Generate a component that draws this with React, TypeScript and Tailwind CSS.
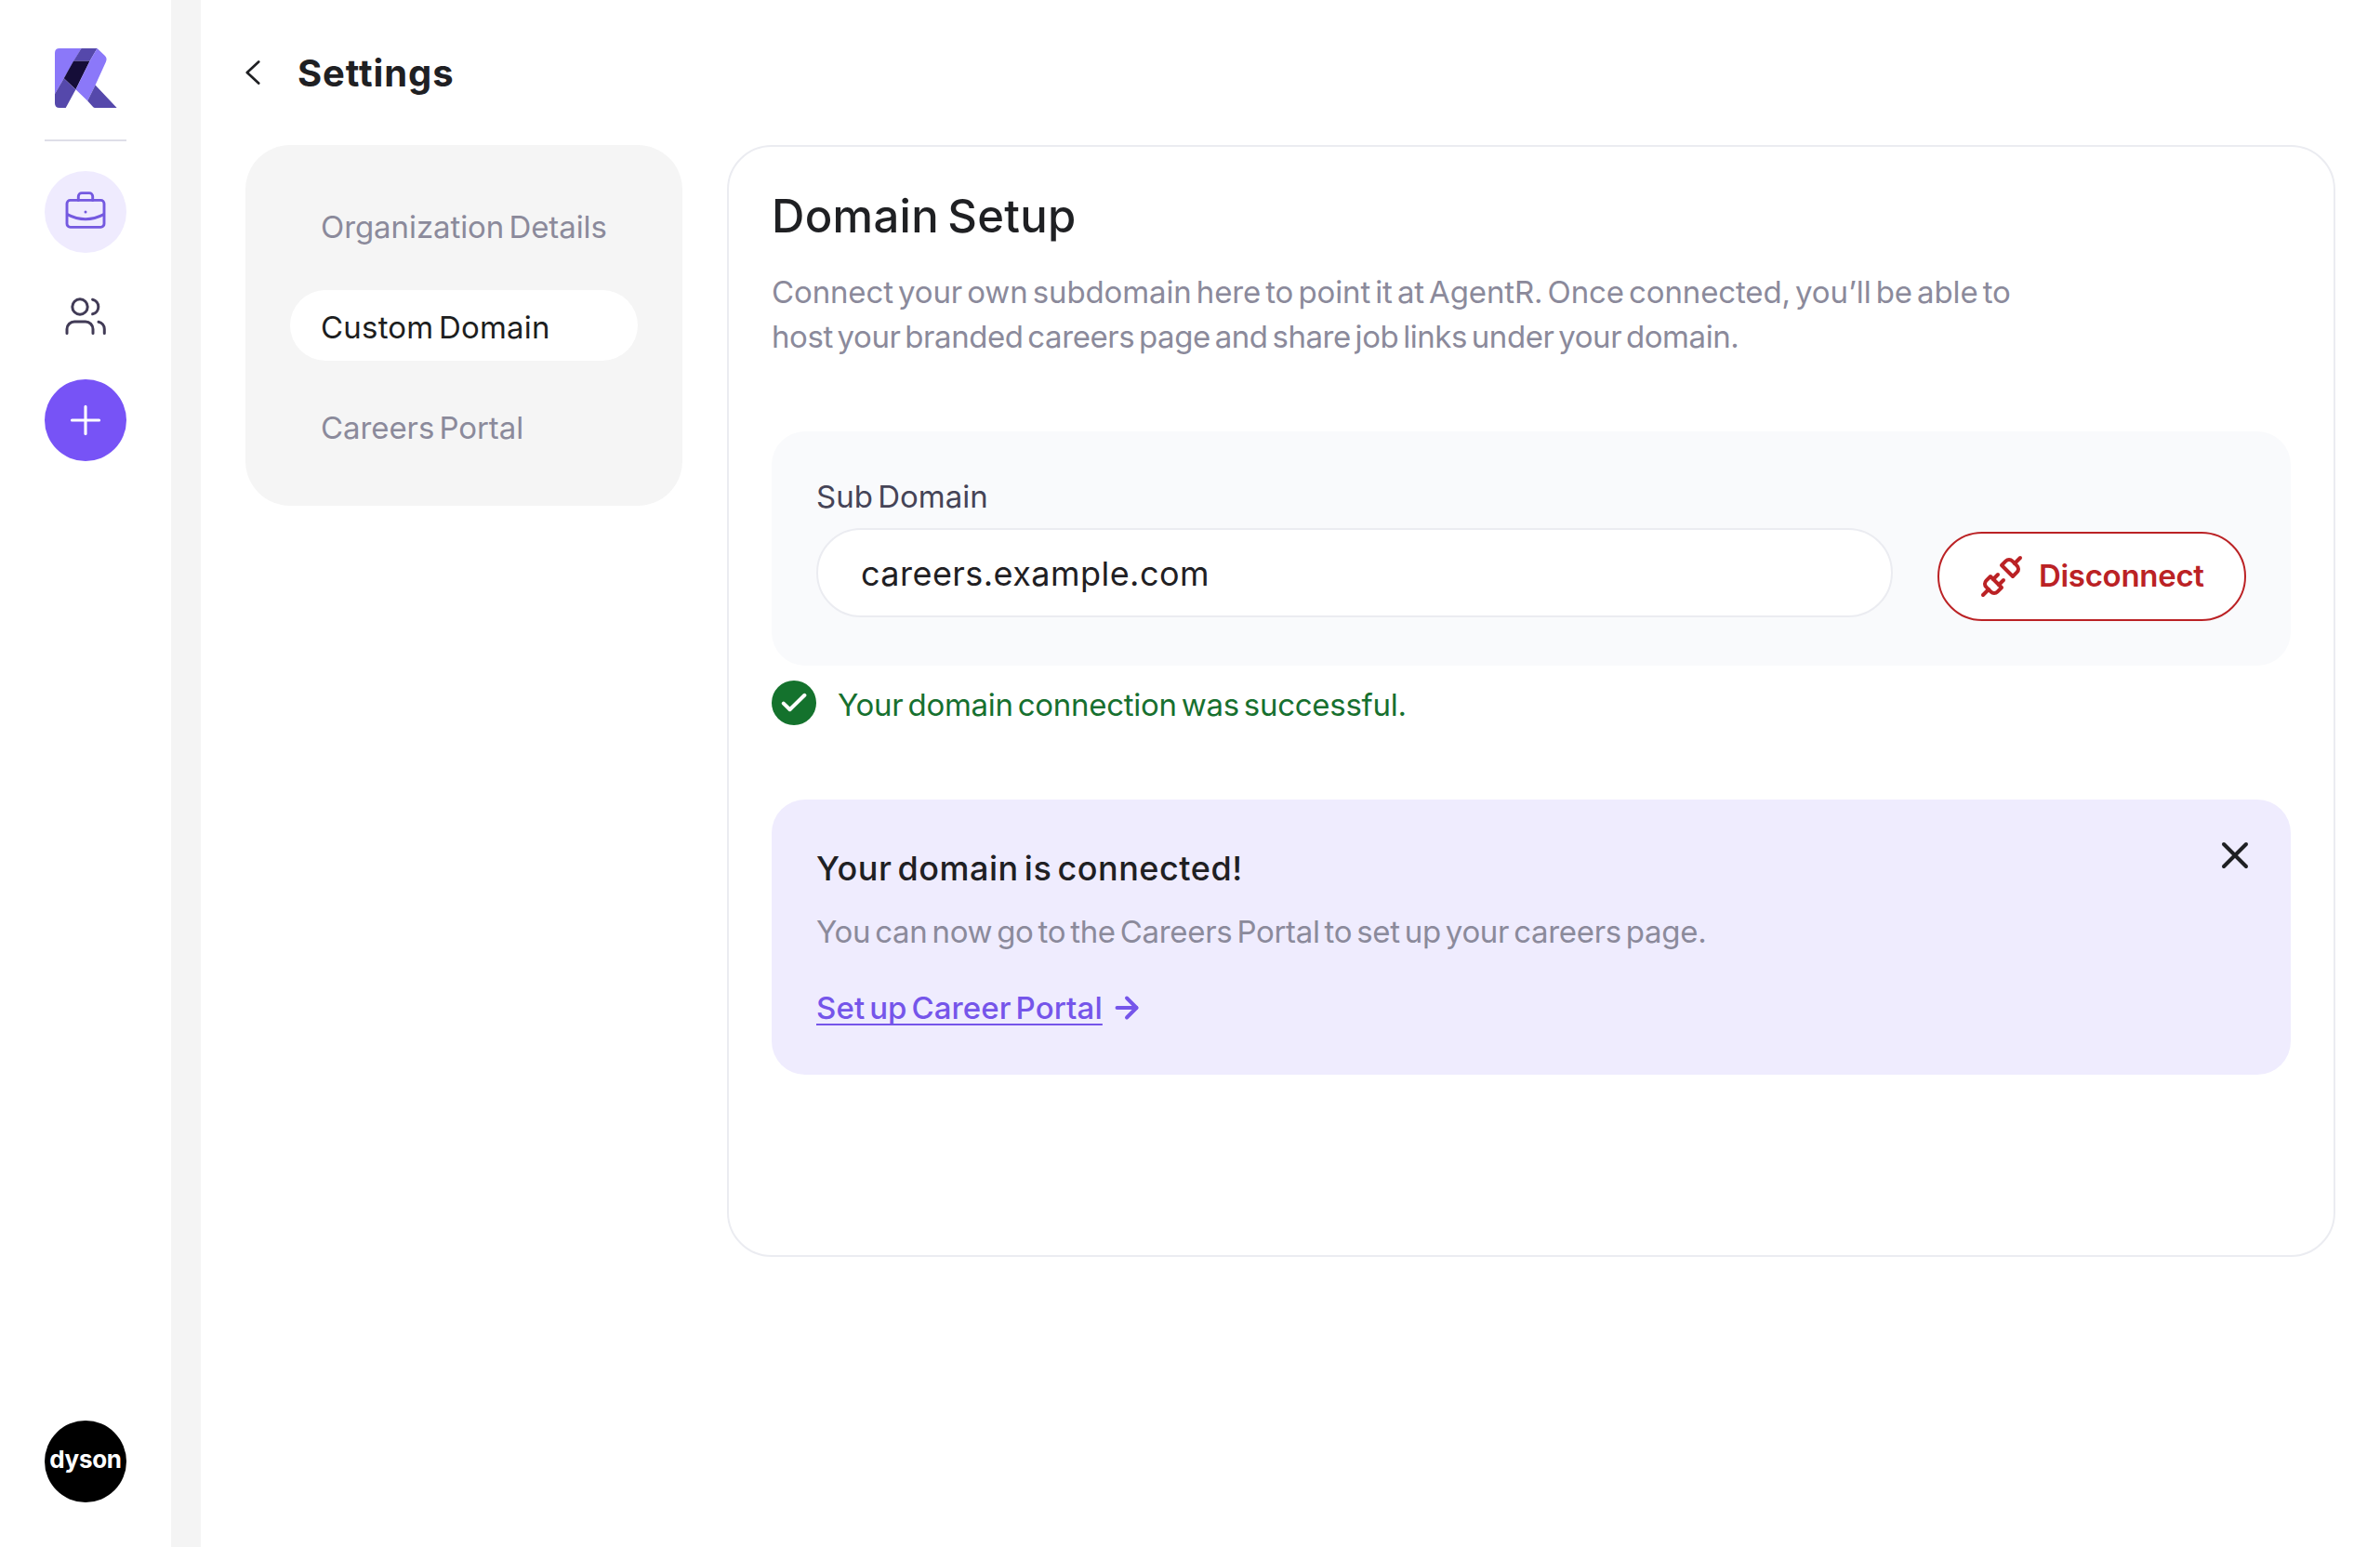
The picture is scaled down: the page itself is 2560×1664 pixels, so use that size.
import type { ReactNode } from "react";
import { ArrowRight, Plus, Unplug, X } from "lucide-react";

function Logo() {
  return (
    <svg width="67" height="64" viewBox="55 37 200 191" aria-label="AgentR">
      <path d="M70 37H140L84 133L55 183V52Q55 37 70 37Z" fill="#8b78f9" />
      <path d="M140 37H191L167 78H115Z" fill="#5548ab" />
      <path d="M115 78H167L122 169L84 133Z" fill="#150d38" />
      <path d="M84 133L122 169L90 228H70Q55 228 55 213V183Z" fill="#5548ab" />
      <path d="M191 37L216 61Q224 69 219 80L185 155L160 206L122 169L167 78Z" fill="#8b78f9" />
      <path d="M185 155L254 228H184Q180 228 177 224L160 206Z" fill="#5548ab" />
    </svg>
  );
}

function Briefcase() {
  return (
    <svg width="48" height="48" viewBox="68 204 48 48" fill="none" stroke="#7459e0" strokeWidth="2.9" strokeLinecap="round">
      <rect x="72" y="215.4" width="40" height="29" rx="3.6" />
      <path d="M84.3 215.4v-4.2a3.6 3.6 0 0 1 3.6-3.6h8.2a3.6 3.6 0 0 1 3.6 3.6v4.2" />
      <path d="M72.4 230.6Q92 240.8 111.6 230.6" />
      <circle cx="92" cy="228" r="1.5" fill="#7459e0" stroke="none" />
    </svg>
  );
}

function Users() {
  return (
    <svg width="48" height="48" viewBox="68 316 48 48" fill="none" stroke="#413b56" strokeWidth="3" strokeLinecap="round">
      <circle cx="86" cy="330" r="8.2" />
      <path d="M72 358.4v-4.4a8 8 0 0 1 8-8h12a8 8 0 0 1 8 8v4.4" />
      <path d="M99.6 322.2a8 8 0 0 1 0 15.6" />
      <path d="M106 346.2a8 8 0 0 1 6.3 7.8v4.4" />
    </svg>
  );
}

function Sidebar() {
  return (
    <aside className="flex w-[184px] shrink-0 flex-col items-center bg-white pt-[52px] pb-12">
      <Logo />
      <div className="mt-[34px] h-0.5 w-[88px] bg-[#dedee8]" />
      <nav className="mt-8 flex flex-col items-center gap-6">
        <button className="flex size-[88px] items-center justify-center rounded-full bg-[#efebfe]">
          <Briefcase />
        </button>
        <button className="flex size-[88px] items-center justify-center">
          <Users />
        </button>
        <button className="flex size-[88px] items-center justify-center rounded-full bg-[#7753f6] text-white">
          <Plus size={50} strokeWidth={1.5} />
        </button>
      </nav>
      <div className="mt-auto flex size-[88px] items-center justify-center rounded-full bg-black pb-[5px] text-[26px] font-bold tracking-[-0.3px] text-white">
        dyson
      </div>
    </aside>
  );
}

function NavItem({ children, active = false }: { children: ReactNode; active?: boolean }) {
  return (
    <div
      className={
        active
          ? "flex h-[76px] items-center rounded-full bg-white pt-1.5 pl-[33px] tracking-[0.2px] text-[#1d1e20]"
          : "flex h-[76px] items-center rounded-full pt-1.5 pl-[33px] tracking-[-0.08px] text-[#8b8a9b]"
      }
    >
      {children}
    </div>
  );
}

export default function App() {
  return (
    <div className="flex h-[1664px] w-[2560px] overflow-hidden bg-white font-['Inter',sans-serif] text-[33px] whitespace-nowrap text-[#1f2023] [word-spacing:-4px]">
      <Sidebar />
      <div className="w-8 shrink-0 bg-[#f4f4f4]" />
      <main className="flex flex-1 flex-col pr-12 pl-12">
        <header className="flex h-[156px] items-center gap-[38px]">
          <svg width="18" height="28" viewBox="264 64 18 28" fill="none" stroke="#1f2023" strokeWidth="2.7" strokeLinecap="round" strokeLinejoin="round">
            <path d="M278.2 66.5L265.8 78L278.2 89.6" />
          </svg>
          <h1 className="pt-0.5 text-[40px] font-bold tracking-[0.9px]">Settings</h1>
        </header>
        <div className="flex items-start gap-12">
          <nav className="flex w-[470px] flex-col gap-8 rounded-[48px] bg-[#f5f5f5] p-12">
            <NavItem>Organization Details</NavItem>
            <NavItem active>Custom Domain</NavItem>
            <NavItem>Careers Portal</NavItem>
          </nav>
          <section className="h-[1196px] w-[1730px] rounded-[48px] border-2 border-[#ebecf1] px-[46px] pt-[46px]">
            <h2 className="pt-px text-[49px] leading-[56px] font-medium tracking-[0.3px]">Domain Setup</h2>
            <p className="mt-[29px] leading-[48px] text-[#8b8a9b]">
              <span className="block tracking-[-0.13px]">
                Connect your own subdomain here to point it at AgentR. Once connected, you’ll be able to
              </span>
              <span className="block tracking-[-0.44px]">
                host your branded careers page and share job links under your domain.
              </span>
            </p>

            <div className="mt-[78px] flex items-end gap-12 rounded-[36px] bg-[#f9fafc] p-12">
              <label className="mb-1 flex flex-1 flex-col gap-3">
                <span className="leading-[44px] text-[#454457]">Sub Domain</span>
                <span className="flex h-24 items-center rounded-full border-2 border-[#ebecf1] bg-white pt-[2px] pl-[46px] text-[36px] tracking-[0.45px]">
                  careers.example.com
                </span>
              </label>
              <button className="flex h-24 w-[332px] items-center gap-4 rounded-full border-2 border-[#bb2225] bg-white pl-[43px] font-semibold tracking-[-0.3px] text-[#bb2225]">
                <Unplug size={48} strokeWidth={2} />
                Disconnect
              </button>
            </div>

            <div className="mt-4 flex h-12 items-center gap-[23px] text-[#17702f]">
              <svg width="48" height="48" viewBox="0 0 48 48" fill="none">
                <circle cx="24" cy="24" r="24" fill="#14722d" />
                <path d="M12.8 24.6L19.6 31.2L35.4 15.8" stroke="#fff" strokeWidth="4" strokeLinecap="round" strokeLinejoin="round" />
              </svg>
              <span className="pt-1.5 tracking-[-0.28px]">Your domain connection was successful.</span>
            </div>

            <div className="relative mt-20 rounded-[36px] bg-[#efecfe] p-12">
              <h3 className="text-[36px] leading-[52px] font-medium tracking-[0.52px]">Your domain is connected!</h3>
              <p className="mt-[18px] leading-[48px] tracking-[-0.31px] text-[#8b8a9b]">
                You can now go to the Careers Portal to set up your careers page.
              </p>
              <a className="mt-[34px] flex h-12 items-center gap-2 font-medium text-[#7555ea]">
                <span className="pt-0.5 tracking-[0.1px] underline decoration-[1.5px] underline-offset-[5px] [text-decoration-skip-ink:none]">
                  Set up Career Portal
                </span>
                <ArrowRight size={36} strokeWidth={2.6} />
              </a>
              <X className="absolute top-9 right-9" size={48} strokeWidth={2} />
            </div>
          </section>
        </div>
      </main>
    </div>
  );
}
